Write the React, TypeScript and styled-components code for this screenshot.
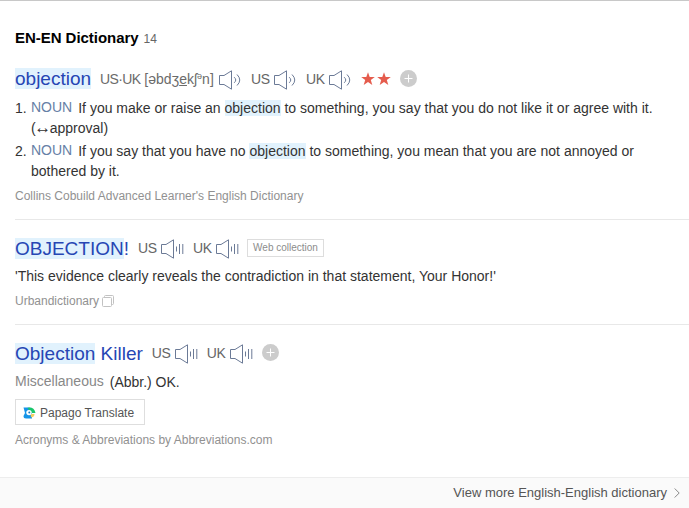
import React from "react";
import styled, { createGlobalStyle } from "styled-components";

const Global = createGlobalStyle`
  * { box-sizing: border-box; }
  body { margin: 0; background: #fff; font-family: "Liberation Sans", Arial, sans-serif; }
`;

const Page = styled.main`
  width: 689px;
  height: 508px;
  display: flex;
  flex-direction: column;
  border-top: 1px solid #c8c8c8;
  overflow: hidden;
  color: #333;
`;

const Header = styled.header`
  height: 57px;
  padding: 27px 0 0 15px;
  display: flex;
  align-items: baseline;
  gap: 5px;
  line-height: 20px;
`;

const Title = styled.h2`
  margin: 0;
  font-size: 15px;
  letter-spacing: -0.04px;
  font-weight: 700;
  color: #000;
`;

const Count = styled.span`
  font-size: 12px;
  color: #666;
`;

const Entry = styled.section<{ $height: number; $ruled?: boolean }>`
  height: ${(p) => p.$height}px;
  margin-left: 15px;
  padding-top: ${(p) => (p.$ruled ? 17 : 10)}px;
  border-top: ${(p) => (p.$ruled ? "1px solid #e8e8e8" : "0")};
`;

const HeadRow = styled.div`
  display: flex;
  align-items: center;
  height: 22px;
`;

const Headword = styled.a<{ $drop?: number }>`
  font-size: 19px;
  line-height: 22px;
  color: #2646b4;
  margin: ${(p) => p.$drop ?? 0}px 9px 0 0;
  white-space: nowrap;
`;

const Mark = styled.mark`
  color: inherit;
  background: #e1f2fd;
`;

const Phonetic = styled.span`
  font-size: 14px;
  line-height: 20px;
  color: #6b6b6b;
  white-space: nowrap;
  width: 114px;
  margin-right: 5px;
  sup { font-size: 9px; line-height: 0; vertical-align: 5px; }
`;

const Accents = styled.span`
  letter-spacing: -0.65px;
`;

const Region = styled.span`
  font-size: 14px;
  line-height: 20px;
  letter-spacing: -0.5px;
  color: #666;
  width: 23px;
  white-space: nowrap;
`;

const Speaker = styled.svg`
  width: 24px;
  height: 20px;
  margin: 2px 8px 0 0;
  flex: none;
  fill: none;
  stroke: #6b7a96;
`;

const Star = styled.svg`
  width: 14px;
  height: 14px;
  margin-right: 2px;
  fill: #e55c4d;
`;

const AddButton = styled.button<{ $gap: number }>`
  width: 17px;
  height: 17px;
  margin: 0 0 1px ${(p) => p.$gap}px;
  padding: 0;
  border: 0;
  border-radius: 50%;
  background: #ccc;
  display: grid;
  place-items: center;
`;

const Tag = styled.span`
  width: 77px;
  height: 18px;
  margin-left: -1px;
  border: 1px solid #ddd;
  font-size: 10px;
  line-height: 16px;
  text-align: center;
  color: #8c8c8c;
  white-space: nowrap;
`;

const Senses = styled.ol`
  list-style: none;
  margin: 8px 0 0;
  padding: 0;
  display: grid;
  gap: 3px;
`;

const Sense = styled.li`
  display: grid;
  grid-template-columns: 16px 1fr;
  font-size: 14px;
  line-height: 20px;
`;

const Arrow = styled.span`
  font-size: 17px;
  line-height: 0;
  margin: 0 -1.5px;
`;

const PartOfSpeech = styled.span`
  display: inline-block;
  line-height: 18px;
  height: 20px;
  vertical-align: top;
  color: #6680a6;
  margin-right: 6px;
`;

const Meaning = styled.p<{ $top: number }>`
  margin: ${(p) => p.$top}px 0 0;
  font-size: 14px;
  line-height: 20px;
  white-space: nowrap;
`;

const Category = styled(PartOfSpeech)`
  color: #888;
`;

const Source = styled.div`
  display: flex;
  align-items: center;
  gap: 3px;
  margin-top: 7px;
  font-size: 12px;
  line-height: 16px;
  color: #919191;
`;

const TranslateButton = styled.button`
  display: flex;
  align-items: center;
  width: 130px;
  height: 26px;
  margin: 7px 0 0;
  padding: 1px 0 0 7px;
  gap: 4px;
  border: 1px solid #dedede;
  background: #fff;
  font: 12px "Liberation Sans", Arial, sans-serif;
  color: #555;
  white-space: nowrap;
`;

const Footer = styled.footer`
  height: 31px;
  flex: none;
  border-top: 1px solid #ededed;
  background: #fafafa;
  display: flex;
  justify-content: flex-end;
  align-items: center;
  gap: 7px;
  padding: 0 9px 1px 0;
  font-size: 13px;
  color: #555;
`;

const Sound = ({ bars }: { bars?: boolean }) => (
  <Speaker viewBox="0 0 24 20">
    <path d="M.5 5.5H5L12.5 .8V19.2L5 14.5H.5Z" />
    {bars ? (
      <path d="M15.5 7.5V12.5M18.5 5V15M21.8 5V15" />
    ) : (
      <path d="M15.2 7.2Q18.3 10 15.2 12.8M18 4.5Q23.5 10 18 15.5" />
    )}
  </Speaker>
);

const Pronunciations = ({ bars }: { bars?: boolean }) => (
  <>
    <Region>US</Region>
    <Sound bars={bars} />
    <Region>UK</Region>
    <Sound bars={bars} />
  </>
);

const RatingStar = () => (
  <Star viewBox="0 0 14 14">
    <path d="M7 .2 8.7 5.1H13.8L9.8 8.1 11.3 13 7 10.1 2.7 13 4.2 8.1 .2 5.1H5.3Z" />
  </Star>
);

const Add = ({ gap = 0 }: { gap?: number }) => (
  <AddButton $gap={gap} aria-label="Add">
    <svg width="9" height="9" viewBox="0 0 9 9" stroke="#fff">
      <path d="M4.5 .5V8.5M.5 4.5H8.5" />
    </svg>
  </AddButton>
);

export default function App() {
  return (
    <>
      <Global />
      <Page>
        <Header>
          <Title>EN-EN Dictionary</Title>
          <Count>14</Count>
        </Header>

        <Entry $height={161}>
          <HeadRow>
            <Headword><Mark>objection</Mark></Headword>
            <Phonetic><Accents>US·UK</Accents> [əbdʒ<u>e</u>kʃ<sup>ə</sup>n]</Phonetic>
            <Sound />
            <Pronunciations />
            <RatingStar />
            <RatingStar />
            <Add gap={7} />
          </HeadRow>
          <Senses>
            <Sense>
              <span>1.</span>
              <span>
                <PartOfSpeech>NOUN</PartOfSpeech>
                If you make or raise an <Mark>objection</Mark> to something, you say that you do not like it or agree with it.
                <br />(<Arrow>↔</Arrow>approval)
              </span>
            </Sense>
            <Sense>
              <span>2.</span>
              <span>
                <PartOfSpeech>NOUN</PartOfSpeech>
                If you say that you have no <Mark>objection</Mark> to something, you mean that you are not annoyed or
                <br />bothered by it.
              </span>
            </Sense>
          </Senses>
          <Source>Collins Cobuild Advanced Learner's English Dictionary</Source>
        </Entry>

        <Entry $height={105} $ruled>
          <HeadRow>
            <Headword $drop={2}><Mark>OBJECTION</Mark>!</Headword>
            <Pronunciations bars />
            <Tag>Web collection</Tag>
          </HeadRow>
          <Meaning $top={7}>'This evidence clearly reveals the contradiction in that statement, Your Honor!'</Meaning>
          <Source>
            Urbandictionary
            <svg width="12" height="12" viewBox="0 0 12 12" fill="none" stroke="#c2c2c2">
              <rect x=".5" y="2.5" width="9" height="9" rx="1" />
              <path d="M2.5 2.5V1.5Q2.5.5 3.5.5H10.5Q11.5.5 11.5 1.5V8.5Q11.5 9.5 10.5 9.5H9.5" />
            </svg>
          </Source>
        </Entry>

        <Entry $height={153} $ruled>
          <HeadRow>
            <Headword $drop={2}><Mark>Objection</Mark> Killer</Headword>
            <Pronunciations bars />
            <Add />
          </HeadRow>
          <Meaning $top={8}><Category>Miscellaneous</Category>(Abbr.) OK.</Meaning>
          <TranslateButton>
            <svg width="13" height="12" viewBox="0 0 13 12">
              <path d="M.5 .5H6Q9 .5 9 4V11.5H3Q.5 11.5 .5 9L2 6Z" fill="#1594e8" />
              <path d="M4.5 .8Q11-.5 12.5 6H8L6 3Z" fill="#19c66b" />
              <path d="M7.5 7H11.5Q11.5 10 8 10.5Z" fill="#f1cf63" />
              <circle cx="6" cy="5.6" r="2.7" fill="#fff" />
              <circle cx="6.3" cy="5.5" r="1" fill="#197abf" />
            </svg>
            Papago Translate
          </TranslateButton>
          <Source>Acronyms &amp; Abbreviations by Abbreviations.com</Source>
        </Entry>

        <Footer>
          View more English-English dictionary
          <svg width="6" height="10" viewBox="0 0 6 10" fill="none" stroke="#888">
            <path d="M.7 .5 5.2 5 .7 9.5" />
          </svg>
        </Footer>
      </Page>
    </>
  );
}
